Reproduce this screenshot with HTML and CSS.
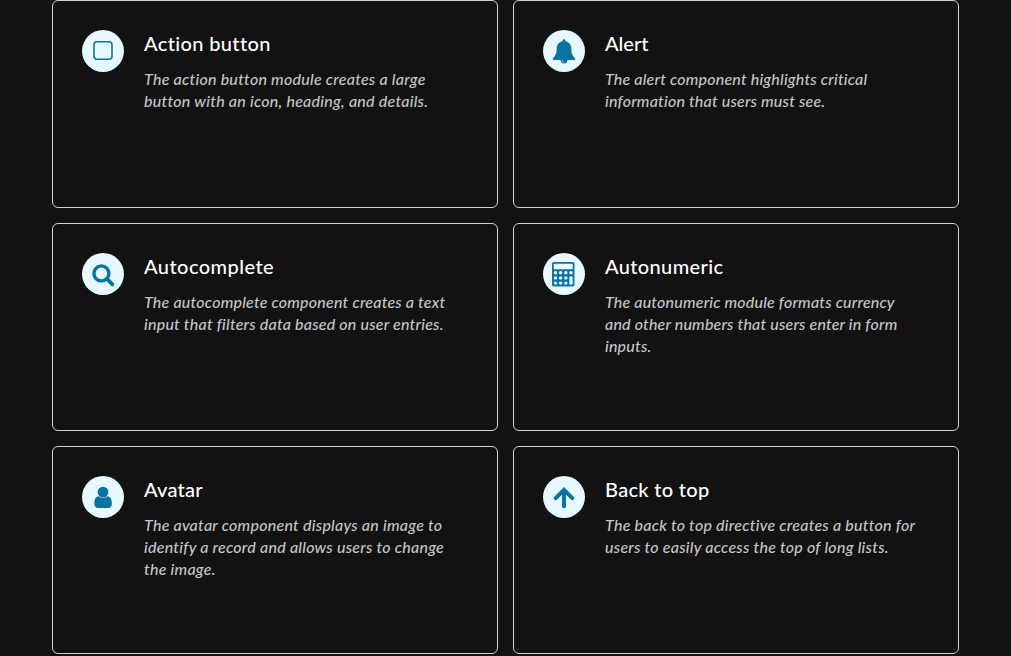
FILE: index.html
```html
<!DOCTYPE html>
<html lang="en">
<head>
<meta charset="utf-8">
<title>Components</title>
<link rel="stylesheet" href="styles.css">
</head>
<body>
<main class="grid">
  <article class="card">
    <span class="icon"><svg viewBox="0 0 42 42"><rect class="line" x="12" y="11.800" width="18" height="17.400" rx="3"/></svg></span>
    <div class="body"><h2 class="title t-action">Action button</h2>
    <p class="desc">The action button module creates a large<br>button with an icon, heading, and details.</p></div>
  </article>
  <article class="card">
    <span class="icon"><svg viewBox="0 0 42 42"><path d="M21 9.300c.8 0 1.400.6 1.400 1.400v.6c3.800.7 5.900 3.600 5.900 7.200 0 5.200 1.500 7.900 4 9.900 0 1-.8 1.700-1.700 1.700h-6.200a3.400 3.400 0 0 1-6.800 0h-6.200c-.9 0-1.700-.7-1.700-1.700 2.500-2 4-4.700 4-9.900 0-3.600 2.100-6.500 5.900-7.200v-.6c0-.8.6-1.400 1.400-1.400z"/><path class="cut" d="M19.100 30.200c0 1.100.8 1.900 1.900 1.900"/></svg></span>
    <div class="body"><h2 class="title t-alert">Alert</h2>
    <p class="desc d-alert">The alert component highlights critical<br>information that users must see.</p></div>
  </article>
  <article class="card">
    <span class="icon"><svg viewBox="0 0 42 42"><circle class="lens" cx="19.400" cy="20.400" r="7.500"/><path class="lens round" d="m25 26 5.400 5.400"/></svg></span>
    <div class="body"><h2 class="title t-complete">Autocomplete</h2>
    <p class="desc d-complete">The autocomplete component creates a text<br>input that filters data based on user entries.</p></div>
  </article>
  <article class="card">
    <span class="icon"><svg viewBox="0 0 42 42"><rect x="9" y="9" width="22.500" height="24.500" rx="1.700"/><g class="pale"><rect x="10.800" y="10.800" width="18.900" height="5.400" rx=".5"/><circle cx="12.500" cy="19.700" r="1.700"/><circle cx="17.600" cy="19.700" r="1.700"/><circle cx="22.800" cy="19.700" r="1.700"/><circle cx="28" cy="19.700" r="1.700"/><circle cx="12.500" cy="24.900" r="1.700"/><circle cx="17.600" cy="24.900" r="1.700"/><circle cx="22.800" cy="24.900" r="1.700"/><circle cx="12.500" cy="30.100" r="1.700"/><circle cx="17.600" cy="30.100" r="1.700"/><circle cx="22.800" cy="30.100" r="1.700"/><rect x="26.300" y="23.200" width="3.400" height="8.600" rx="1.500"/></g></svg></span>
    <div class="body"><h2 class="title t-numeric">Autonumeric</h2>
    <p class="desc d-numeric">The autonumeric module formats currency<br>and other numbers that users enter in form<br>inputs.</p></div>
  </article>
  <article class="card">
    <span class="icon"><svg viewBox="0 0 42 42"><path d="M16.600 20.300c1.200 1 2.700 1.600 4.400 1.600s3.200-.6 4.400-1.600c3.200.2 4.500 3.500 4.500 7.400 0 2.600-1.400 4.300-3.500 4.300H15.900c-2.200 0-3.600-1.700-3.600-4.300 0-3.900 1.100-7.200 4.300-7.400z"/><circle cx="21" cy="16.100" r="5.400"/></svg></span>
    <div class="body"><h2 class="title t-avatar">Avatar</h2>
    <p class="desc">The avatar component displays an image to<br>identify a record and allows users to change<br>the image.</p></div>
  </article>
  <article class="card">
    <span class="icon"><svg viewBox="0 0 42 42"><path class="arrow" d="M21 14v16.200M12.700 22.100 21 13.900l8.300 8.200"/></svg></span>
    <div class="body"><h2 class="title t-back">Back to top</h2>
    <p class="desc">The back to top directive creates a button for<br>users to easily access the top of long lists.</p></div>
  </article>
</main>
</body>
</html>
```
FILE: styles.css
```css
body { margin: 0; background: #121212; font-family: Lato, "Open Sans", sans-serif; overflow: hidden; }
.grid { display: grid; grid-template-columns: repeat(2, 446px); grid-auto-rows: 208px; gap: 15px; margin-left: 52px; }
.card { box-sizing: border-box; display: flex; align-items: flex-start; gap: 20px; padding: 29px; border: 1px solid #d0d2d3; border-radius: 6px; }
.icon { flex: none; width: 42px; height: 42px; border-radius: 50%; background: #e7f8ff; }
.icon svg { display: block; width: 42px; height: 42px; fill: #0974a1; }
.icon .line { fill: none; stroke: #0974a1; stroke-width: 1.6; }
.icon .lens { fill: none; stroke: #0974a1; stroke-width: 3.4; }
.icon .round { stroke-linecap: round; stroke-width: 3.8; }
.icon .cut { fill: none; stroke: #e7f8ff; stroke-width: .7; }
.icon .pale { fill: #e7f8ff; }
.icon .arrow { fill: none; stroke: #0974a1; stroke-width: 4; stroke-linecap: round; }
.body { margin-top: -1px; white-space: nowrap; font-variant-ligatures: none; }
.title { margin: 0 0 11px; font-size: 20px; line-height: 28px; font-weight: 500; color: #fff; }
.t-action { letter-spacing: .36px; }
.t-complete { letter-spacing: .45px; }
.t-numeric { letter-spacing: .36px; }
.t-avatar { letter-spacing: .25px; }
.t-back { letter-spacing: .3px; }
.desc { margin: 0; font-size: 16px; line-height: 22px; font-style: italic; font-weight: 500; letter-spacing: .24px; color: #c3c5c6; }
.d-alert { letter-spacing: .19px; }
.d-complete { letter-spacing: .21px; }
.d-numeric { letter-spacing: .18px; }
```
